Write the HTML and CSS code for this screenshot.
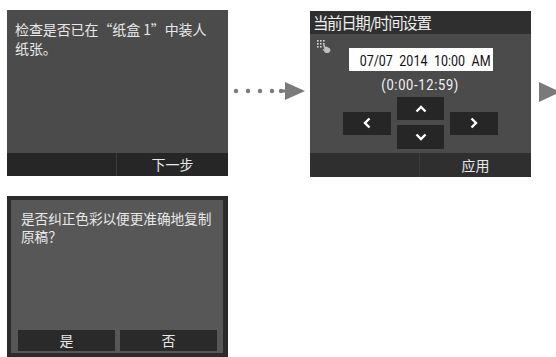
FILE: index.html
```html
<!DOCTYPE html>
<html lang="zh">
<head>
    <meta charset="UTF-8">
    <meta name="viewport" content="width=device-width, initial-scale=1.0">
    <title>操作面板画面</title>
    <link rel="stylesheet" href="styles.css">
</head>
<body>
    <div class="row">
        <!-- step 1: paper check -->
        <div class="screen">
            <div class="screen-body">
                <p class="msg">检查是否已在“纸盒 1”中装人<br>纸张。</p>
            </div>
            <div class="screen-foot">
                <span></span>
                <span>下一步</span>
            </div>
        </div>

        <svg class="connector" width="72" height="18" viewBox="0 0 72 18">
            <circle cx="3" cy="9" r="2.2" fill="#7a7a7a"/>
            <circle cx="15" cy="9" r="2.2" fill="#7a7a7a"/>
            <circle cx="27" cy="9" r="2.2" fill="#7a7a7a"/>
            <circle cx="39" cy="9" r="2.2" fill="#7a7a7a"/>
            <circle cx="48" cy="9" r="2.2" fill="#7a7a7a"/>
            <rect x="48" y="7.5" width="6" height="3" fill="#7a7a7a"/>
            <polygon points="52,0 72,9 52,18" fill="#7a7a7a"/>
        </svg>

        <!-- step 2: date / time -->
        <div class="screen screen-date">
            <div class="screen-title">当前日期/时间设置</div>
            <div class="screen-body date-body">
                <svg class="keypad-icon" width="14" height="13" viewBox="0 0 14 13">
                    <g fill="#d8d8d8">
                        <rect x="0" y="0" width="1.6" height="1.6"/>
                        <rect x="3" y="0" width="1.6" height="1.6"/>
                        <rect x="6" y="0" width="1.6" height="1.6"/>
                        <rect x="0" y="3" width="1.6" height="1.6"/>
                        <rect x="3" y="3" width="1.6" height="1.6"/>
                        <rect x="6" y="3" width="1.6" height="1.6"/>
                        <rect x="0" y="6" width="1.6" height="1.6"/>
                        <rect x="3" y="6" width="1.6" height="1.6"/>
                    </g>
                    <path d="M6 5 L7.5 4.5 L8.5 7 L9.5 6.5 L13 8.5 L13.5 11 L11.5 13 L8.5 13 L5.5 9.5 L6.5 9 L7.5 9.8 Z" fill="#bdbdbd"/>
                </svg>
                <div class="date-box"><span class="narrow">07/07 2014 10:00 AM</span></div>
                <div class="range"><span class="narrow">(0:00-12:59)</span></div>
                <div class="keys">
                    <div class="key key-side">
                        <svg width="8" height="12" viewBox="0 0 8 12"><polyline points="6.5,1.5 2,6 6.5,10.5" fill="none" stroke="#fff" stroke-width="2.4"/></svg>
                    </div>
                    <div class="key-col">
                        <div class="key key-up">
                            <svg width="12" height="8" viewBox="0 0 12 8"><polyline points="1.5,6.5 6,2 10.5,6.5" fill="none" stroke="#fff" stroke-width="2.4"/></svg>
                        </div>
                        <div class="key key-down">
                            <svg width="12" height="8" viewBox="0 0 12 8"><polyline points="1.5,1.5 6,6 10.5,1.5" fill="none" stroke="#fff" stroke-width="2.4"/></svg>
                        </div>
                    </div>
                    <div class="key key-side">
                        <svg width="8" height="12" viewBox="0 0 8 12"><polyline points="1.5,1.5 6,6 1.5,10.5" fill="none" stroke="#fff" stroke-width="2.4"/></svg>
                    </div>
                </div>
            </div>
            <div class="screen-foot">
                <span></span>
                <span>应用</span>
            </div>
        </div>

        <svg class="next-arrow" width="17" height="20" viewBox="0 0 17 20">
            <polygon points="0,0 21,10 0,20" fill="#7a7a7a"/>
        </svg>
    </div>

    <div class="row row-bottom">
        <!-- colour correction prompt -->
        <div class="screen screen-confirm">
            <div class="confirm-inner">
                <p class="msg">是否纠正色彩以便更准确地复制<br>原稿？</p>
                <div class="choices">
                    <div class="choice">是</div>
                    <div class="choice">否</div>
                </div>
            </div>
        </div>
    </div>
</body>
</html>
```

FILE: styles.css
```css
html, body {
    overflow: hidden;
}
body {
    margin: 0;
    padding: 10px 0 0 7px;
    background-color: #fff;
    font-family: "Noto Sans CJK SC", "Noto Sans", sans-serif;
    color: #e8e8e8;
}
.row {
    display: flex;
    align-items: flex-start;
}
.row-bottom {
    margin-top: 19px;
}
.screen {
    width: 221px;
    height: 166px;
    display: flex;
    flex-direction: column;
    flex-shrink: 0;
}
.screen-body {
    flex: 1;
    background-color: #4b4b4b;
}
.msg {
    margin: 0;
    padding: 10px 8px;
    font-size: 14px;
    line-height: 19px;
    letter-spacing: -0.1px;
}
.screen-foot {
    height: 23px;
    display: grid;
    grid-template-columns: 110px 1fr;
    background-color: #262626;
    font-size: 14px;
    line-height: 23px;
    text-align: center;
}
.screen-foot span:first-child {
    border-right: 1px solid #3c3c3c;
}
.connector {
    margin: 72px 0 0 5px;
    flex-shrink: 0;
}
.next-arrow {
    margin: 72px 0 0 8px;
    flex-shrink: 0;
}

/* date / time screen */
.screen-date {
    margin: 1px 0 0 5px;
}
.screen-date .screen-foot {
    height: 24px;
    line-height: 24px;
    background-color: #2f2f2f;
}
.screen-title {
    height: 23px;
    padding-left: 3px;
    background-color: #2f2f2f;
    font-size: 15.5px;
    line-height: 23px;
    letter-spacing: -1.4px;
    color: #f0f0f0;
}
.date-body {
    position: relative;
    display: flex;
    flex-direction: column;
    align-items: center;
    padding-top: 14px;
}
.keypad-icon {
    position: absolute;
    left: 7px;
    top: 6px;
}
.narrow {
    display: inline-block;
    font-family: Roboto, "Liberation Sans", sans-serif;
    transform: scaleX(0.86);
}
.date-box {
    width: 144px;
    height: 23px;
    background-color: #fff;
    color: #111;
    font-size: 14.5px;
    line-height: 23px;
    text-align: center;
    white-space: nowrap;
    word-spacing: 4px;
}
.range {
    margin-top: 4px;
    font-size: 15px;
    line-height: 18px;
    letter-spacing: 0.8px;
    color: #f2f2f2;
}
.keys {
    margin-top: 3px;
    display: flex;
    align-items: center;
    gap: 6px;
}
.key-col {
    display: flex;
    flex-direction: column;
    gap: 5px;
}
.key {
    display: flex;
    align-items: center;
    justify-content: center;
    background-color: #262626;
}
.key-side {
    width: 48px;
    height: 23px;
}
.key-up {
    width: 47px;
    height: 23px;
}
.key-down {
    width: 47px;
    height: 24px;
}

/* confirm screen */
.screen-confirm {
    height: 161px;
    box-sizing: border-box;
    padding: 4px 5px 4px 4px;
    background-color: #2b2b2b;
}
.confirm-inner {
    flex: 1;
    display: flex;
    flex-direction: column;
    background-color: #575757;
}
.confirm-inner .msg {
    padding: 9px 10px;
    font-size: 13.7px;
    line-height: 18px;
}
.choices {
    margin-top: auto;
    display: flex;
    gap: 5px;
    padding: 0 6px 2px 7px;
}
.choice {
    flex: 1;
    height: 21px;
    background-color: #2a2a2a;
    font-size: 14px;
    line-height: 21px;
    text-align: center;
}
```
